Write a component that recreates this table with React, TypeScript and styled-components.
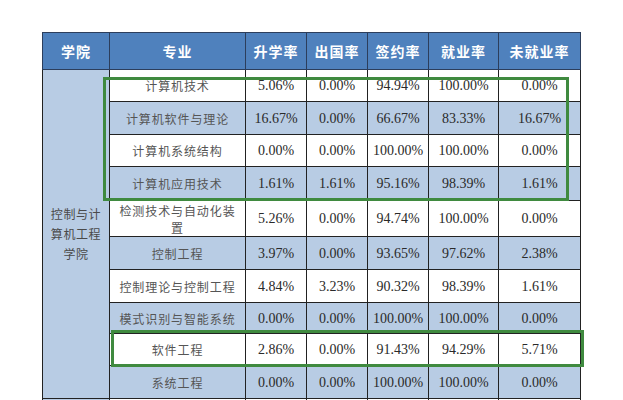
import React from 'react';
import styled, { createGlobalStyle } from 'styled-components';

const GlobalStyle = createGlobalStyle`
  html, body {
    margin: 0;
    padding: 0;
    background: #ffffff;
  }
  body {
    font-family: 'Liberation Serif', 'Noto Sans CJK SC', serif;
    overflow: hidden;
  }
`;

const Page = styled.div`
  position: relative;
  width: 623px;
  height: 400px;
  overflow: hidden;
  padding: 32px 0 0 42px;
  box-sizing: border-box;
`;

const Table = styled.table`
  border-collapse: collapse;
  table-layout: fixed;
  width: 538px;
`;

const HeadCell = styled.th`
  background: #4f81bd;
  color: #ffffff;
  height: 36px;
  padding: 0;
  border: 1px solid #2c3e5c;
  font-family: 'Noto Sans CJK SC', sans-serif;
  font-size: 14px;
  line-height: 18px;
  font-weight: 700;
  letter-spacing: 1px;
  text-align: center;
  vertical-align: middle;
`;

const Row = styled.tr<{ $shaded: boolean; $height: number }>`
  height: ${({ $height }) => $height}px;
  background: ${({ $shaded }) => ($shaded ? '#b8cce4' : '#ffffff')};
`;

const CollegeCell = styled.td`
  background: #b8cce4;
  border: 1px solid #222222;
  padding: 0 4px;
  font-family: 'Noto Sans CJK SC', sans-serif;
  font-size: 12px;
  line-height: 20px;
  letter-spacing: 0.6px;
  color: #4a4a4a;
  text-align: center;
  vertical-align: middle;
`;

const MajorCell = styled.td`
  border: 1px solid #222222;
  padding: 0 5px;
  font-family: 'Noto Sans CJK SC', sans-serif;
  font-size: 12px;
  line-height: 17px;
  letter-spacing: 0.9px;
  color: #555555;
  text-align: center;
  vertical-align: middle;
`;

const RateCell = styled.td`
  border: 1px solid #222222;
  padding: 0;
  font-family: 'Liberation Serif', serif;
  font-size: 14px;
  line-height: 17px;
  color: #2a2a2a;
  text-align: center;
  vertical-align: middle;
`;

const Highlight = styled.div<{ $left: number; $top: number; $width: number; $height: number }>`
  position: absolute;
  left: ${({ $left }) => $left}px;
  top: ${({ $top }) => $top}px;
  width: ${({ $width }) => $width}px;
  height: ${({ $height }) => $height}px;
  border: 3px solid #3f8a3f;
  box-sizing: border-box;
  pointer-events: none;
`;

const headers = ['学院', '专业', '升学率', '出国率', '签约率', '就业率', '未就业率'];
const widths = [67, 136, 61, 61, 61, 70, 82];

type Major = { name: string; rates: string[]; height: number };

const majors: Major[] = [
  { name: '计算机技术', rates: ['5.06%', '0.00%', '94.94%', '100.00%', '0.00%'], height: 32 },
  { name: '计算机软件与理论', rates: ['16.67%', '0.00%', '66.67%', '83.33%', '16.67%'], height: 33 },
  { name: '计算机系统结构', rates: ['0.00%', '0.00%', '100.00%', '100.00%', '0.00%'], height: 32 },
  { name: '计算机应用技术', rates: ['1.61%', '1.61%', '95.16%', '98.39%', '1.61%'], height: 34 },
  { name: '检测技术与自动化装置', rates: ['5.26%', '0.00%', '94.74%', '100.00%', '0.00%'], height: 36 },
  { name: '控制工程', rates: ['3.97%', '0.00%', '93.65%', '97.62%', '2.38%'], height: 33 },
  { name: '控制理论与控制工程', rates: ['4.84%', '3.23%', '90.32%', '98.39%', '1.61%'], height: 33 },
  { name: '模式识别与智能系统', rates: ['0.00%', '0.00%', '100.00%', '100.00%', '0.00%'], height: 31 },
  { name: '软件工程', rates: ['2.86%', '0.00%', '91.43%', '94.29%', '5.71%'], height: 32 },
  { name: '系统工程', rates: ['0.00%', '0.00%', '100.00%', '100.00%', '0.00%'], height: 33 },
];

const App: React.FC = () => {
  return (
    <>
      <GlobalStyle />
      <Page>
        <Table>
          <colgroup>
            {widths.map((w, i) => (
              <col key={i} style={{ width: w }} />
            ))}
          </colgroup>
          <thead>
            <tr>
              {headers.map((h) => (
                <HeadCell key={h}>{h}</HeadCell>
              ))}
            </tr>
          </thead>
          <tbody>
            {majors.map((m, i) => (
              <Row key={m.name} $shaded={i % 2 === 1} $height={m.height}>
                {i === 0 && (
                  <CollegeCell rowSpan={majors.length}>控制与计算机工程学院</CollegeCell>
                )}
                <MajorCell>{m.name}</MajorCell>
                {m.rates.map((r, j) => (
                  <RateCell key={j}>{r}</RateCell>
                ))}
              </Row>
            ))}
            {/* next college starts just below the fold */}
            <Row $shaded={false} $height={33}>
              <CollegeCell />
              <MajorCell />
              {[0, 1, 2, 3, 4].map((j) => (
                <RateCell key={j} />
              ))}
            </Row>
          </tbody>
        </Table>

        <Highlight $left={103} $top={77} $width={466} $height={124} />
        <Highlight $left={111} $top={330} $width={473} $height={37} />
      </Page>
    </>
  );
};

export default App;
